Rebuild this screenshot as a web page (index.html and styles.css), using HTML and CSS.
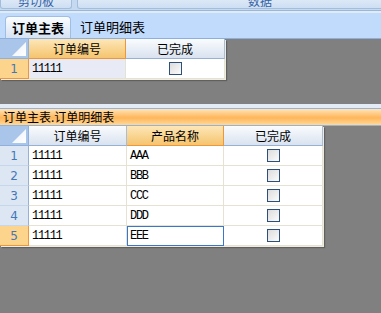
FILE: index.html
```html
<!DOCTYPE html>
<html lang="zh-CN">
<head>
    <meta charset="UTF-8">
    <title>订单主表</title>
    <link rel="stylesheet" href="styles.css">
</head>
<body>
    <div class="ribbon">
        <div class="rb-btn rb-clip"><span>剪切板</span></div>
        <div class="rb-btn rb-data"><span>数据</span></div>
    </div>
    <div class="tabs">
        <div class="tab active">订单主表</div>
        <div class="tab">订单明细表</div>
    </div>

    <div class="master">
        <div class="grid grid-master">
            <div class="corner"><svg width="14" height="14" viewBox="0 0 14 14"><defs><linearGradient id="tri1" x1="0" y1="0" x2="1" y2="1"><stop offset="0" stop-color="#e8f0fa"/><stop offset="1" stop-color="#ffffff"/></linearGradient></defs><polygon points="14,0 14,14 0,14" fill="url(#tri1)"/></svg></div>
            <div class="head head-sel">订单编号</div>
            <div class="head">已完成</div>

            <div class="rowhead rowhead-sel">1</div>
            <div class="cell cell-row">11111</div>
            <div class="cell cell-check"><span class="check"></span></div>
        </div>
    </div>

    <div class="splitter"></div>
    <div class="caption">订单主表.订单明细表</div>

    <div class="detail">
        <div class="grid grid-detail">
            <div class="corner"><svg width="14" height="14" viewBox="0 0 14 14"><defs><linearGradient id="tri2" x1="0" y1="0" x2="1" y2="1"><stop offset="0" stop-color="#e8f0fa"/><stop offset="1" stop-color="#ffffff"/></linearGradient></defs><polygon points="14,0 14,14 0,14" fill="url(#tri2)"/></svg></div>
            <div class="head">订单编号</div>
            <div class="head head-sel">产品名称</div>
            <div class="head">已完成</div>

            <div class="rowhead">1</div>
            <div class="cell">11111</div>
            <div class="cell">AAA</div>
            <div class="cell cell-check"><span class="check"></span></div>

            <div class="rowhead">2</div>
            <div class="cell">11111</div>
            <div class="cell">BBB</div>
            <div class="cell cell-check"><span class="check"></span></div>

            <div class="rowhead">3</div>
            <div class="cell">11111</div>
            <div class="cell">CCC</div>
            <div class="cell cell-check"><span class="check"></span></div>

            <div class="rowhead">4</div>
            <div class="cell">11111</div>
            <div class="cell">DDD</div>
            <div class="cell cell-check"><span class="check"></span></div>

            <div class="rowhead rowhead-sel">5</div>
            <div class="cell">11111</div>
            <div class="cell cell-focus">EEE</div>
            <div class="cell cell-check"><span class="check"></span></div>
        </div>
    </div>
</body>
</html>
```

FILE: styles.css
```css
body {
    margin: 0;
    width: 381px;
    height: 313px;
    overflow: hidden;
    background-color: #808080;
    font-family: "Noto Sans CJK SC", sans-serif;
    font-size: 12px;
    color: #000;
}

/* ribbon remains at the top */
.ribbon {
    height: 10px;
    display: flex;
    gap: 5px;
    background-color: #c5daf1;
    border-bottom: 1px solid #9cb6d6;
    overflow: hidden;
}

.rb-btn {
    flex: none;
    box-sizing: border-box;
    height: 9px;
    border: 1px solid #a3bddc;
    border-top: none;
    border-radius: 0 0 3px 3px;
    background: linear-gradient(#dce8f6, #cddff3);
    color: #3563a6;
    text-align: center;
    overflow: hidden;
}

.rb-btn span {
    display: block;
    line-height: 12px;
    margin-top: -5px;
}

.rb-clip {
    width: 72px;
}

.rb-data {
    width: 366px;
}

/* tabs */
.tabs {
    height: 25px;
    display: flex;
    align-items: flex-end;
    padding-left: 5px;
    background-color: #c0dbfc;
    border-top: 2px solid #e0ebf8;
    border-bottom: 1px solid #8eafdb;
}

.tab {
    box-sizing: border-box;
    height: 22px;
    padding: 0 9px;
    line-height: 21px;
    font-size: 13px;
}

.tab.active {
    width: 66px;
    padding: 0;
    text-align: center;
    font-weight: bold;
    border: 1px solid #a0bde2;
    border-bottom: none;
    border-radius: 4px 4px 0 0;
    background: linear-gradient(#fbfdff, #d6e3f3);
}

/* panels */
.master {
    height: 65px;
}

.splitter {
    height: 4px;
    background-color: #e2ebf6;
}

.caption {
    height: 16px;
    line-height: 16px;
    padding-left: 3px;
    border-top: 1px solid #94b3db;
    border-bottom: 1px solid #94b3db;
    background: linear-gradient(#ffe4b8, #ffb65a 55%, #ffd898);
}

/* grids */
.grid {
    display: grid;
    grid-auto-rows: 20px;
    width: max-content;
    background-color: #fff;
    box-shadow: 1px 1px 0 #efebde, 2px 2px 1px rgba(0, 0, 0, 0.25);
}

.grid-master {
    grid-template-columns: 29px 97px 99px;
}

.grid-detail {
    grid-template-columns: 29px 98px 97px 99px;
}

.corner {
    box-sizing: border-box;
    display: flex;
    justify-content: flex-end;
    align-items: flex-end;
    padding: 0 2px 2px 0;
    background-color: #a9c5e9;
    border-right: 1px solid #8fb0dc;
    border-bottom: 1px solid #8fb0dc;
}

.head {
    box-sizing: border-box;
    display: flex;
    align-items: center;
    justify-content: center;
    background: linear-gradient(#fafcfe, #d9e2ef);
    border-right: 1px solid #a9bdd8;
    border-bottom: 1px solid #97b0d3;
}

.head-sel {
    background: linear-gradient(#fde7b8, #f5c46e);
    border-right-color: #f0963a;
    border-bottom-color: #f0963a;
}

.rowhead {
    box-sizing: border-box;
    display: flex;
    align-items: center;
    justify-content: center;
    background-color: #dde7f4;
    border-right: 1px solid #97b0d3;
    border-bottom: 1px solid #c6d6eb;
    color: #4377b8;
    font-family: "DejaVu Sans", sans-serif;
    font-size: 12px;
}

.rowhead-sel {
    background-color: #fdd48c;
    border-right-color: #f0963a;
    border-bottom-color: #f0963a;
}

.cell {
    box-sizing: border-box;
    display: flex;
    align-items: center;
    padding-left: 3px;
    background-color: #fff;
    border-right: 1px solid #e6e2d3;
    border-bottom: 1px solid #e6e2d3;
    font-family: "Liberation Mono", monospace;
    font-size: 12px;
    letter-spacing: -1.3px;
}

.cell-row {
    background-color: #e8ebf6;
}

.cell-check {
    justify-content: center;
    padding-left: 0;
}

.cell-focus {
    border: 1px solid #3b77c9;
    padding-left: 2px;
}

.check {
    box-sizing: border-box;
    width: 13px;
    height: 13px;
    border: 1px solid #2c5079;
    background: linear-gradient(135deg, #dcdcdc, #fbfbfb);
}
```
